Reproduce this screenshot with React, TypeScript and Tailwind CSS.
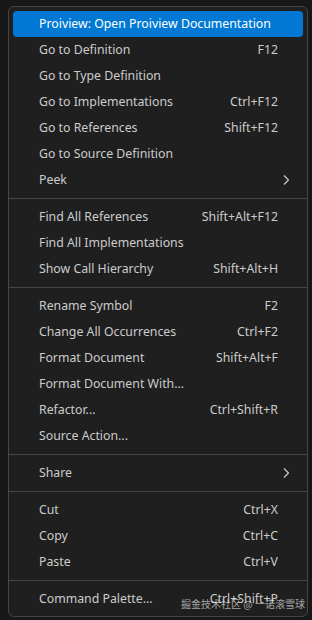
import React from 'react';

type Item =
  | { type: 'item'; label: string; keys?: string; sub?: boolean; active?: boolean }
  | { type: 'sep' };

const items: Item[] = [
  { type: 'item', label: 'Proiview: Open Proiview Documentation', active: true },
  { type: 'item', label: 'Go to Definition', keys: 'F12' },
  { type: 'item', label: 'Go to Type Definition' },
  { type: 'item', label: 'Go to Implementations', keys: 'Ctrl+F12' },
  { type: 'item', label: 'Go to References', keys: 'Shift+F12' },
  { type: 'item', label: 'Go to Source Definition' },
  { type: 'item', label: 'Peek', sub: true },
  { type: 'sep' },
  { type: 'item', label: 'Find All References', keys: 'Shift+Alt+F12' },
  { type: 'item', label: 'Find All Implementations' },
  { type: 'item', label: 'Show Call Hierarchy', keys: 'Shift+Alt+H' },
  { type: 'sep' },
  { type: 'item', label: 'Rename Symbol', keys: 'F2' },
  { type: 'item', label: 'Change All Occurrences', keys: 'Ctrl+F2' },
  { type: 'item', label: 'Format Document', keys: 'Shift+Alt+F' },
  { type: 'item', label: 'Format Document With...' },
  { type: 'item', label: 'Refactor...', keys: 'Ctrl+Shift+R' },
  { type: 'item', label: 'Source Action...' },
  { type: 'sep' },
  { type: 'item', label: 'Share', sub: true },
  { type: 'sep' },
  { type: 'item', label: 'Cut', keys: 'Ctrl+X' },
  { type: 'item', label: 'Copy', keys: 'Ctrl+C' },
  { type: 'item', label: 'Paste', keys: 'Ctrl+V' },
  { type: 'sep' },
  { type: 'item', label: 'Command Palette...', keys: 'Ctrl+Shift+P' },
];

const Chevron = () => (
  <svg width="8" height="12" viewBox="0 0 8 12" fill="none" className="absolute right-[13px] top-1/2 -translate-y-1/2">
    <path d="M2 1.5 L6.5 6 L2 10.5" stroke="#cccccc" strokeWidth="1.2" />
  </svg>
);

export default function App() {
  return (
    <div className="w-[312px] h-[620px] bg-[#181818] pt-[6px] pl-[8px] overflow-hidden relative" style={{ fontFamily: '"Noto Sans", "Open Sans", sans-serif' }}>
      {/* context menu */}
      <div className="w-[300px] bg-[#1f1f1f] border border-[#454545] rounded-[6px] py-[4px] text-[12.3px]">
        {items.map((it, i) =>
          it.type === 'sep' ? (
            <div key={i} className="h-[11px] pt-[5px]">
              <div className="h-px bg-[#454545]" />
            </div>
          ) : (
            <div
              key={i}
              className={`relative mx-[4px] h-[26px] flex items-center justify-between pl-[26px] pr-[25px] rounded-[4px] ${
                it.active ? 'bg-[#0078d4] text-white' : 'text-[#cccccc]'
              }`}
            >
              <span className="whitespace-nowrap">{it.label}</span>
              {it.keys && <span className="whitespace-nowrap">{it.keys}</span>}
              {it.sub && <Chevron />}
            </div>
          )
        )}
      </div>

      {/* watermark */}
      <div
        className="absolute left-[181px] top-[596px] text-[10px] leading-[15px] text-white/60 whitespace-nowrap"
        style={{ fontFamily: '"Noto Sans CJK SC", sans-serif' }}
      >
        掘金技术社区 @ 一诺滚雪球
      </div>
    </div>
  );
}
